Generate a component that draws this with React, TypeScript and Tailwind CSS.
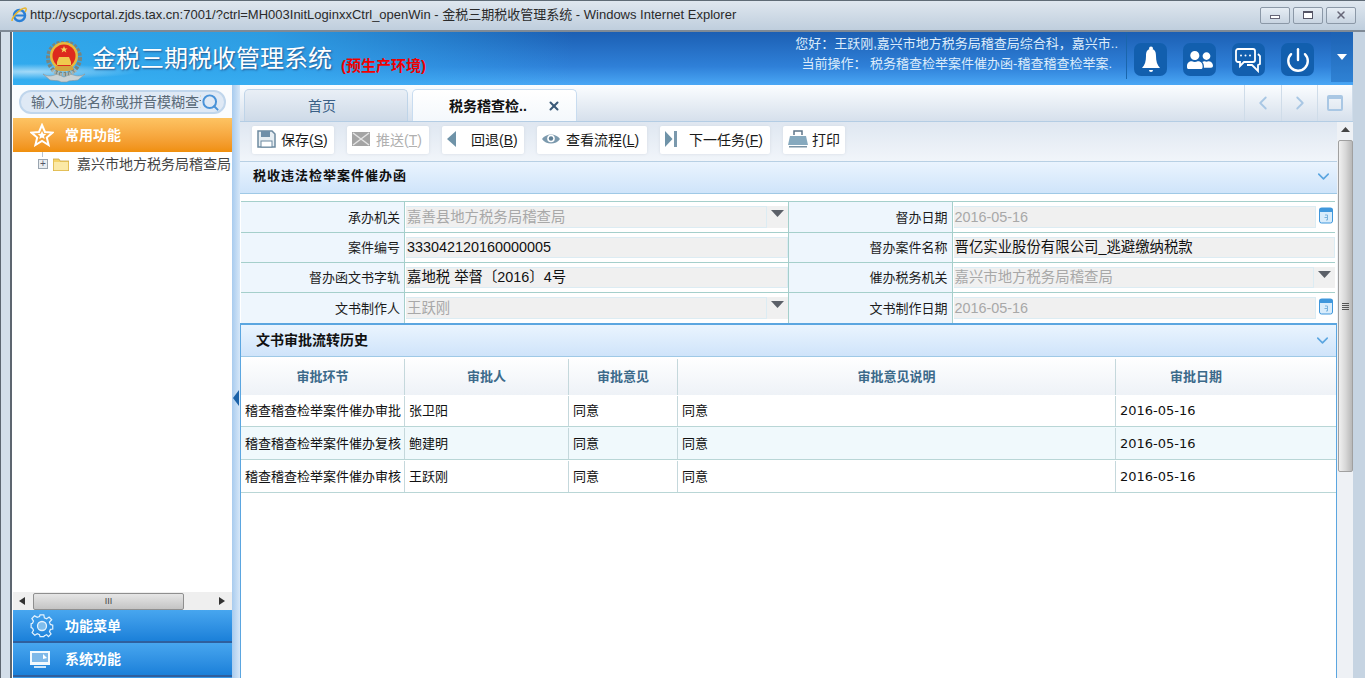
import { Power, Search, X, ChevronLeft, ChevronRight, ChevronDown } from "lucide-react";
import { FaUserFriends } from "react-icons/fa";
import { FC, ReactNode } from "react";

const SANS = "font-['Liberation_Sans','Noto_Sans_CJK_SC',sans-serif]";

const Arrow = () => (
  <svg width="13" height="8" viewBox="0 0 13 8">
    <path d="M0 0H13L6.5 7Z" fill="#5b6068" />
  </svg>
);

const CalendarIcon = () => (
  <svg width="14" height="17" viewBox="0 0 14 17">
    <rect x="0.5" y="1" width="13" height="15" rx="2" fill="#d8ecfb" stroke="#3f97dc" />
    <rect x="0.5" y="1" width="13" height="4" rx="1" fill="#3f97dc" />
    <path d="M6 8h2.500v5H7M5.500 10.500h3" stroke="#7bb3dd" fill="none" />
  </svg>
);

const Emblem = () => (
  <svg width="42" height="42" viewBox="0 0 42 42">
    <path d="M0 33C5 36 10 35 14 33L21 36L28 33C32 35 37 36 42 33L35 39C30 40 26 39 24 41H18C16 39 12 40 7 39Z" fill="#c9d2d4" stroke="#8b9698" strokeWidth=".600" />
    <circle cx="21" cy="17" r="16" fill="none" stroke="#78857f" strokeWidth="4" strokeDasharray="3 1.500" />
    <path d="M9 29C14 35 28 35 33 29" fill="none" stroke="#a9b2ac" strokeWidth="3" strokeDasharray="2 1" />
    <circle cx="21" cy="15" r="14" fill="#e8b93c" />
    <circle cx="21" cy="15" r="11.500" fill="#dd2a1e" />
    <path d="M14 21h14v3H14ZM16 16h10l2 5H14Z" fill="#f0c94e" />
    <path d="M21 5l1 2.500h2.600l-2.100 1.600.8 2.500-2.300-1.500-2.300 1.500.8-2.500-2.100-1.600H20Z" fill="#f5d65e" />
    <path d="M11 28c4 3 16 3 20 0l-2-3H13Z" fill="#d4a43e" />
  </svg>
);

const IeIcon = () => (
  <svg width="16" height="16" viewBox="0 0 16 16">
    <circle cx="8.500" cy="8.500" r="5.500" fill="none" stroke="#2a7fd6" strokeWidth="2.500" />
    <path d="M4 8.500h9" stroke="#2a7fd6" strokeWidth="2" />
    <path d="M1 14C1 10 8 2 14 1c2 0 1 3 0 4" fill="none" stroke="#e7b52e" strokeWidth="1.500" />
  </svg>
);

const SaveIcon = () => (
  <svg width="19" height="18" viewBox="0 0 19 18">
    <path d="M1 1h14l3 3v13H1Z" fill="#e6edf2" stroke="#6d8aa0" strokeWidth="1.500" />
    <rect x="4" y="1" width="9" height="6" fill="#6f8fa8" />
    <rect x="4" y="11" width="11" height="6" fill="#fff" stroke="#6d8aa0" />
  </svg>
);

const MailIcon = () => (
  <svg width="18" height="14" viewBox="0 0 18 14">
    <rect width="18" height="14" fill="#a4a4a4" />
    <path d="M1 1l16 12M17 1L1 13" stroke="#e4e4e4" strokeWidth="1.500" />
  </svg>
);

const BackIcon = () => (
  <svg width="9" height="16" viewBox="0 0 9 16">
    <path d="M9 0V16L0 8Z" fill="#6f93a8" />
  </svg>
);

const EyeIcon = () => (
  <svg width="18" height="12" viewBox="0 0 18 12">
    <path d="M0 6C4 0 14 0 18 6C14 12 4 12 0 6Z" fill="#7b99ad" />
    <circle cx="9" cy="5.500" r="3.800" fill="#fff" />
    <circle cx="9" cy="5.500" r="2.200" fill="#5f7f95" />
  </svg>
);

const NextIcon = () => (
  <svg width="12" height="16" viewBox="0 0 12 16">
    <path d="M0 0L7.500 8L0 16Z" fill="#6f93a8" />
    <rect x="9" y="0" width="3" height="16" fill="#7b99ad" />
  </svg>
);

const PrintIcon = () => (
  <svg width="20" height="18" viewBox="0 0 20 18">
    <path d="M6 5V1h8v4" fill="none" stroke="#5f7689" strokeWidth="1.500" />
    <path d="M2 6h16l2 9H0Z" fill="#86a9be" />
    <rect x="1" y="16" width="18" height="1.500" fill="#7a93a5" />
  </svg>
);

const BellIcon = () => (
  <svg width="20" height="28" viewBox="0 0 20 28">
    <circle cx="10" cy="2.500" r="2" fill="#fff" />
    <path d="M10 3c-4 0-5 3-5 7 0 5-1 9-4 12h18c-3-3-4-7-4-12 0-4-1-7-5-7Z" fill="#fff" />
    <path d="M8 24h4a2 2 0 0 1-4 0Z" fill="#fff" />
  </svg>
);

const ChatIcon = () => (
  <svg width="27" height="26" viewBox="0 0 27 26" fill="none" stroke="#fff" strokeWidth="1.800">
    <path d="M3 2h15a2 2 0 0 1 2 2v9a2 2 0 0 1-2 2H9l-4 4v-4H3a2 2 0 0 1-2-2V4a2 2 0 0 1 2-2Z" />
    <path d="M23 7l2 2v8l-2 1v6l-6-6h-5" />
    <circle cx="6" cy="8.500" r="1" fill="#fff" stroke="none" />
    <circle cx="10.500" cy="8.500" r="1" fill="#fff" stroke="none" />
    <circle cx="15" cy="8.500" r="1" fill="#fff" stroke="none" />
  </svg>
);

const GearIcon = () => (
  <svg width="24" height="24" viewBox="0 0 24 24" fill="none" stroke="#e4f2fd" strokeWidth="1.300">
    <path d="M10 1h4l.6 3 2.400 1 2.600-1.700 2.800 2.800L20 8.700l1 2.400 2.500.9v4l-2.500.4-1 2.400 1.700 2.400-2.800 2.800L17 22l-2.400 1-.6 1h-4l-.6-2L7 21l-2.600 1.600-2.800-2.800L3 17.300 2 15 .5 14.400v-4L2 9.900l1-2.400-1.700-2.700 2.800-2.800L7 3.600l2.400-1Z" transform="scale(.94) translate(.7 0)" />
    <circle cx="12" cy="12" r="4.500" fill="#7fbdec" />
  </svg>
);

const ScreenIcon = () => (
  <svg width="20" height="18" viewBox="0 0 20 18">
    <rect width="20" height="14" fill="#f2f9fe" />
    <rect x="2" y="2" width="16" height="9" fill="#7fb9e9" />
    <path d="M13 3l4 4-4 1Z" fill="#fff" />
    <path d="M4 15h12v2H4Z" fill="#cfe6f8" />
  </svg>
);

const HeaderBtn: FC<{ children: ReactNode }> = ({ children }) => (
  <div className="flex h-[33px] w-[33px] items-center justify-center rounded-[7px] bg-[#125fae]">{children}</div>
);

const ToolButton: FC<{ icon: ReactNode; label: string; hot?: string; width: string; disabled?: boolean }> = ({
  icon,
  label,
  hot,
  width,
  disabled,
}) => (
  <div
    className={`flex h-[28px] items-center bg-white pl-[5px] text-[14px] rounded-[2px] shadow-[0_0_3px_#d4dbe3] ${width} ${
      disabled ? "text-[#b0b0b0]" : "text-[#1a1a1a]"
    }`}
  >
    <span className="flex w-[24px] justify-start pb-[3px]">{icon}</span>
    <span className="whitespace-nowrap">
      {label}
      {hot && (
        <>
          (<span className="underline">{hot}</span>)
        </>
      )}
    </span>
  </div>
);

const Label: FC<{ children: ReactNode }> = ({ children }) => (
  <div className="flex items-center justify-end bg-[#eef6fd] pr-[4px] pt-[1px] text-[13px] text-[#1c1c1c]">{children}</div>
);

const Field: FC<{ value: string; muted?: boolean; kind?: "select" | "date" }> = ({ value, muted, kind }) => (
  <div className="flex items-stretch bg-white py-[4px] pl-px">
    <div
      className={`flex min-w-0 flex-1 items-center border-y border-r border-[#dcecf3] bg-[#f0f0f0] pl-px pt-px text-[14.4px] ${
        muted ? "text-[#a8a8a8]" : "text-[#111]"
      }`}
    >
      {value}
    </div>
    {kind === "select" && (
      <div className="flex w-[21px] justify-center bg-[#f0f0f0] pt-[4px]">
        <Arrow />
      </div>
    )}
    {kind === "date" && (
      <div className="flex w-[19px] justify-center pt-[1px]">
        <CalendarIcon />
      </div>
    )}
  </div>
);

const rows = [
  { h: "h-[32px]", cells: ["稽查稽查检举案件催办审批", "张卫阳", "同意", "同意", "2016-05-16"] },
  { h: "h-[33px]", cells: ["稽查稽查检举案件催办复核", "鲍建明", "同意", "同意", "2016-05-16"] },
  { h: "h-[33px]", cells: ["稽查稽查检举案件催办审核", "王跃刚", "同意", "同意", "2016-05-16"] },
];

const COLS = "grid-cols-[164px_164px_109px_438px_1fr]";

export default function App() {
  return (
    <div className={`flex h-[678px] w-[1365px] flex-col overflow-hidden bg-[#c9d6e3] ${SANS}`}>
      {/* window title */}
      <div className="flex h-[32px] items-center justify-between border-b-2 border-[#7f8a96] border-t border-t-[#5f6b76] bg-gradient-to-b from-[#dfe7ef] to-[#bfcedd] pb-[1px] pl-[11px] pr-[9px]">
        <div className="flex items-center gap-[3px] text-[13px] text-[#2a2a2a]">
          <IeIcon />
          <span>http://yscportal.zjds.tax.cn:7001/?ctrl=MH003InitLoginxxCtrl_openWin - 金税三期税收管理系统 - Windows Internet Explorer</span>
        </div>
        <div className="flex gap-[3px]">
          {["min", "max", "close"].map((b) => (
            <div
              key={b}
              className="flex h-[17px] w-[30px] items-center justify-center rounded-[2px] border border-[#8b98a7] bg-gradient-to-b from-[#e6edf4] to-[#c8d4e1]"
            >
              {b === "min" && <div className="mt-[4px] h-[4px] w-[10px] border border-[#667] bg-white" />}
              {b === "max" && <div className="h-[8px] w-[10px] border border-t-2 border-[#556] bg-white" />}
              {b === "close" && <X size={12} strokeWidth={3} color="#667" />}
            </div>
          ))}
        </div>
      </div>

      <div className="flex min-h-0 flex-1">
        {/* left frame */}
        <div className="w-[12px] shrink-0 border-x-[1px] border-r-2 border-l-[#5d6670] border-r-[#5d6670] bg-[#d3dee9]" />
        <div className="w-px shrink-0 bg-white" />

        <div className="flex min-w-0 flex-1 flex-col">
          {/* header */}
          <div className="flex h-[53px] shrink-0 items-stretch bg-[linear-gradient(180deg,#1c5fb3_0%,#2f80d8_65%,#4aa7f5_100%)]">
            <div className="flex w-[560px] items-center bg-[radial-gradient(ellipse_at_3%_75%,rgba(255,255,255,.55),rgba(255,255,255,0)_14%),linear-gradient(90deg,rgba(50,175,240,.9)_0%,rgba(50,175,240,.75)_45%,rgba(50,175,240,0)_100%)] pl-[30px]">
              <div className="pt-[6px]">
                <Emblem />
              </div>
              <div className="ml-[7px] text-[24px] leading-none text-white [text-shadow:1px_1px_2px_#24548c]">金税三期税收管理系统</div>
              <div className="ml-[9px] mt-[13px] text-[15px] font-bold leading-none text-[#f00000]">(预生产环境)</div>
            </div>
            <div className="flex flex-1 flex-col items-end pr-[8px] pt-[2px] text-[13px] leading-[20px] text-[#dcecfb]">
              <div className="whitespace-nowrap">您好：王跃刚,嘉兴市地方税务局稽查局综合科，嘉兴市..</div>
              <div className="whitespace-nowrap pr-[6px]">当前操作： 税务稽查检举案件催办函-稽查稽查检举案.</div>
            </div>
            <div className="mb-[6px] w-px bg-[#1a66ac]" />
            <div className="flex items-start gap-[16px] pl-[7px] pt-[11px]">
              <HeaderBtn>
                <BellIcon />
              </HeaderBtn>
              <HeaderBtn>
                <FaUserFriends size={26} color="#fff" />
              </HeaderBtn>
              <HeaderBtn>
                <ChatIcon />
              </HeaderBtn>
              <HeaderBtn>
                <Power size={26} color="#fff" strokeWidth={2.200} />
              </HeaderBtn>
            </div>
            <div className="mb-[3px] ml-[17px] flex w-[22px] items-center justify-center bg-[linear-gradient(180deg,#1d62b4,#2f82d4)]">
              <svg width="10" height="6" viewBox="0 0 10 6">
                <path d="M0 0H10L5 6Z" fill="#fff" />
              </svg>
            </div>
          </div>

          <div className="flex min-h-0 flex-1">
            {/* sidebar */}
            <div className="flex w-[219px] shrink-0 flex-col bg-white">
              <div className="flex h-[33px] shrink-0 items-start bg-[#fafcfe] px-[6px] pt-[5px]">
                <div className="flex h-[24px] w-[208px] items-center overflow-hidden rounded-full border-2 border-[#c0d6ec] bg-[#dfe9f5] pl-[10px]">
                  <span className="w-[170px] shrink-0 overflow-hidden whitespace-nowrap text-[14px] text-[#5a6a78]">输入功能名称或拼音模糊查询</span>
                  <Search size={19} color="#4a93d8" strokeWidth={2.500} />
                </div>
              </div>
              <div className="flex h-[34px] shrink-0 items-center bg-gradient-to-b from-[#fdc362] to-[#f08f0a] pl-[17px] text-[14px] font-bold text-white">
                <svg width="24" height="24" viewBox="0 0 24 24" fill="none" stroke="#fff" strokeWidth="2">
                  <path d="M12 2l3 7 7.500.6-5.700 4.900 1.800 7.500L12 18l-6.600 4 1.800-7.500L1.500 9.600 9 9Z" />
                  <path d="M12 8l1.300 2.800 3 .3-2.300 2 .7 3L12 14.500 9.300 16l.7-3-2.300-2 3-.3Z" fill="#fff" stroke="none" />
                </svg>
                <span className="ml-[11px]">常用功能</span>
              </div>
              <div className="min-h-0 flex-1 overflow-hidden pl-[25px]">
                <div className="ml-[4px] h-[5px] w-px bg-[#b8c4d0]" />
                <div className="flex items-center whitespace-nowrap text-[14px] leading-[14px] text-[#444]">
                  <div className="flex h-[10px] w-[10px] items-center justify-center border border-[#9aa5b0] bg-[#e8ecf0] text-[10px] leading-none text-[#556]">+</div>
                  <svg className="ml-[5px]" width="16" height="14" viewBox="0 0 16 14">
                    <path d="M0 2h6l1 2h9v10H0Z" fill="#f5d368" stroke="#c9a443" strokeWidth=".800" />
                    <rect x="1" y="5" width="14" height="8" fill="#fbe9a6" />
                  </svg>
                  <span className="ml-[8px]">嘉兴市地方税务局稽查局</span>
                </div>
              </div>
              <div className="flex h-[18px] shrink-0 items-center bg-[#efefef] pl-[6px] pr-[7px]">
                <svg width="6" height="8" viewBox="0 0 6 8"><path d="M6 0V8L0 4Z" fill="#333" /></svg>
                <div className="ml-[8px] mr-auto flex h-[17px] w-[151px] items-center justify-center rounded-[2px] border border-[#8f8f8f] bg-gradient-to-b from-[#e6e6e6] to-[#c4c4c4] text-[9px] leading-none text-[#444]">
                  III
                </div>
                <svg width="6" height="8" viewBox="0 0 6 8"><path d="M0 0V8L6 4Z" fill="#333" /></svg>
              </div>
              <div className="flex h-[33px] shrink-0 items-center border-b-2 border-[#2f5f9d] bg-gradient-to-b from-[#47a6ef] to-[#1a80d9] pl-[17px] pt-px text-[14px] font-bold text-white">
                <GearIcon />
                <span className="ml-[11px]">功能菜单</span>
              </div>
              <div className="flex h-[34px] shrink-0 items-center border-b-2 border-[#2f5f9d] bg-gradient-to-b from-[#47a6ef] to-[#1a80d9] pl-[17px] pt-px text-[14px] font-bold text-white">
                <ScreenIcon />
                <span className="ml-[15px]">系统功能</span>
              </div>
              <div className="h-px shrink-0 bg-[#3a98e6]" />
            </div>

            {/* splitter */}
            <div className="flex w-[8px] shrink-0 items-start bg-gradient-to-r from-[#a8cbee] to-[#d6e7f8] pt-[305px]">
              <svg width="7" height="16" viewBox="0 0 7 16"><path d="M7 0V16L1 8Z" fill="#1b62a8" /></svg>
            </div>

            {/* main */}
            <div className="flex min-w-0 flex-1 flex-col">
              <div className="flex h-[37px] shrink-0 items-end border-b border-[#b4cde4] bg-gradient-to-b from-[#fbfdff] to-[#d6e0ec] pl-[4px]">
                <div className="flex h-[32px] w-[164px] items-center justify-center rounded-t-[5px] border border-b-0 border-[#bfd4e8] bg-gradient-to-b from-[#e9eff6] to-[#cedae8] pr-[8px] pt-[2px] text-[14px] text-[#3a5f85]">
                  首页
                </div>
                <div className="ml-[4px] flex h-[32px] w-[165px] items-center rounded-t-[5px] border border-b-0 border-[#c8dcf0] bg-gradient-to-b from-[#ffffff] to-[#f4f8fc] pl-[36px] pt-[1px] text-[14px] font-bold text-[#111]">
                  <span>税务稽查检..</span>
                  <X className="ml-[20px]" size={14} strokeWidth={3.500} color="#3b5a78" />
                </div>
                <div className="ml-auto flex h-full">
                  <div className="flex w-[37px] items-center justify-center border-l border-[#cfdce9]">
                    <ChevronLeft size={22} color="#a9c7e4" strokeWidth={2} />
                  </div>
                  <div className="flex w-[36px] items-center justify-center border-l border-[#cfdce9]">
                    <ChevronRight size={22} color="#a9c7e4" strokeWidth={2} />
                  </div>
                  <div className="flex w-[36px] items-center justify-center border-x border-[#cfdce9]">
                    <div className="h-[16px] w-[16px] rounded-[2px] border-2 border-t-[4px] border-[#a9c7e4]" />
                  </div>
                </div>
              </div>

              <div className="flex min-h-0 flex-1">
                <div className="min-w-0 flex-1 bg-white">
                  {/* toolbar */}
                  <div className="flex h-[40px] items-center gap-[13px] border-b border-[#b8d0e4] bg-gradient-to-b from-[#dfe7f1] to-[#f1f5fa] pb-[3px] pl-[12px]">
                    <ToolButton icon={<SaveIcon />} label="保存" hot="S" width="w-[82px]" />
                    <ToolButton icon={<MailIcon />} label="推送" hot="T" width="w-[82px]" disabled />
                    <ToolButton icon={<BackIcon />} label="回退" hot="B" width="w-[82px]" />
                    <ToolButton icon={<EyeIcon />} label="查看流程" hot="L" width="w-[110px]" />
                    <ToolButton icon={<NextIcon />} label="下一任务" hot="F" width="w-[110px]" />
                    <ToolButton icon={<PrintIcon />} label="打印" width="w-[62px]" />
                  </div>

                  {/* section 1 */}
                  <div className="flex h-[32px] items-center justify-between border-b border-[#9fc9e6] bg-gradient-to-b from-[#eaf4fe] to-[#cfe4fa] pb-[3px] pl-[13px] pr-[4px] text-[13px] font-bold tracking-[1px] text-[#111]">
                    <span>税收违法检举案件催办函</span>
                    <ChevronDown size={19} color="#5aa5e0" />
                  </div>
                  <div className="h-[7px]" />
                  <div className="ml-px mr-[2px] grid grid-cols-[163px_1fr_163px_1fr] grid-rows-[30px_29px_29px_30px] gap-px border-t border-[#a5cfcb] bg-[#a5cfcb]">
                    <Label>承办机关</Label>
                    <Field value="嘉善县地方税务局稽查局" muted kind="select" />
                    <Label>督办日期</Label>
                    <Field value="2016-05-16" muted kind="date" />
                    <Label>案件编号</Label>
                    <Field value="333042120160000005" />
                    <Label>督办案件名称</Label>
                    <Field value="晋亿实业股份有限公司_逃避缴纳税款" />
                    <Label>督办函文书字轨</Label>
                    <Field value="嘉地税 举督〔2016〕4号" />
                    <Label>催办税务机关</Label>
                    <Field value="嘉兴市地方税务局稽查局" muted kind="select" />
                    <Label>文书制作人</Label>
                    <Field value="王跃刚" muted kind="select" />
                    <Label>文书制作日期</Label>
                    <Field value="2016-05-16" muted kind="date" />
                  </div>

                  {/* section 2 */}
                  <div className="h-full border-x border-t-2 border-[#5ba6e0]">
                    <div className="flex h-[32px] items-center justify-between border-b border-[#9fc9e6] bg-gradient-to-b from-[#eaf4fe] to-[#cfe4fa] pl-[15px] pr-[4px] text-[14px] font-bold text-[#111]">
                      <span>文书审批流转历史</span>
                      <ChevronDown size={19} color="#5aa5e0" />
                    </div>
                    <div className={`grid h-[38px] ${COLS} bg-gradient-to-b from-white to-[#eef2f7] pt-[2px] text-[13px] font-bold text-[#3c6a8a]`}>
                      {["审批环节", "审批人", "审批意见", "审批意见说明", "审批日期"].map((h) => (
                        <div
                          key={h}
                          className="flex items-center justify-center border-r border-[#c5d8dc] last:border-r-0 last:pr-[60px]"
                        >
                          {h}
                        </div>
                      ))}
                    </div>
                    {rows.map((r, i) => (
                      <div
                        key={r.cells[0]}
                        className={`grid ${r.h} ${COLS} border-b border-[#b9d6d6] pt-px text-[13px] text-[#111] ${
                          i === 1 ? "bg-[#f0f9fc]" : "bg-white"
                        }`}
                      >
                        {r.cells.map((c, j) => (
                          <div
                            key={j}
                            className={`flex items-center whitespace-nowrap border-r border-[#c5d8dc] pl-[4px] last:border-r-0 ${
                              j === 4 ? "font-['DejaVu_Sans',sans-serif]" : ""
                            }`}
                          >
                            {c}
                          </div>
                        ))}
                      </div>
                    ))}
                  </div>
                </div>

                {/* page scrollbar */}
                <div className="flex w-[16px] shrink-0 flex-col items-center bg-[#eef1f5]">
                  <svg className="mt-[5px]" width="9" height="5" viewBox="0 0 9 5"><path d="M0 5H9L4.500 0Z" fill="#444" /></svg>
                  <div className="mt-[8px] flex h-[332px] w-[15px] items-center justify-center rounded-[2px] border border-[#a0a0a0] bg-gradient-to-r from-[#f0f0f0] via-[#d8d8d8] to-[#b8b8b8]">
                    <div className="flex flex-col gap-[1px]">
                      <div className="h-px w-[7px] bg-[#555]" />
                      <div className="h-px w-[7px] bg-[#555]" />
                      <div className="h-px w-[7px] bg-[#555]" />
                      <div className="h-px w-[7px] bg-[#555]" />
                    </div>
                  </div>
                </div>
              </div>
            </div>
          </div>
        </div>

        {/* right frame */}
        <div className="w-[12px] shrink-0 bg-[#c6d4e2]" />
      </div>
    </div>
  );
}
